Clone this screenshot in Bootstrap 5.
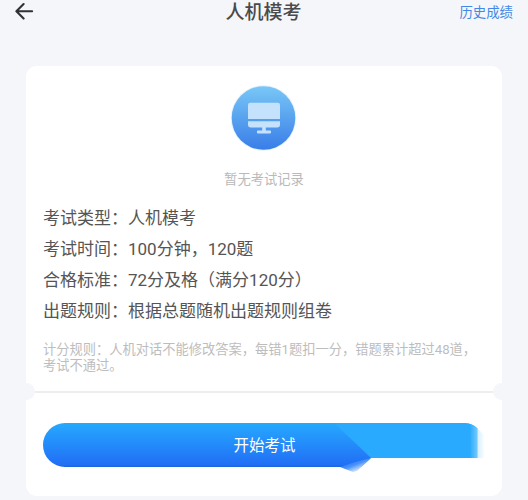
<!DOCTYPE html>
<html lang="zh-CN">
<head>
<meta charset="utf-8">
<meta name="viewport" content="width=device-width, initial-scale=1">
<title>人机模考</title>
<link href="https://cdn.jsdelivr.net/npm/bootstrap@5.3.0/dist/css/bootstrap.min.css" rel="stylesheet">
<style>
body{background:#f5f6fa;font-family:Roboto,"Noto Sans CJK SC",sans-serif;color:#555;height:500px;overflow:hidden}
.top-bar{height:24px;margin-bottom:42px;padding:0 15px 0 14px}
.top-bar>*{flex:1 1 0}
.page-title{font-size:19px;line-height:24px;font-weight:500;color:#4a4a4a;flex:0 0 auto;padding-top:2px}
.history{font-size:13.4px;line-height:24px;color:#4388e5;padding-top:1px}
.exam-card{margin:0 26px;height:430px;border-radius:11px;padding:19px 17px 0}
.empty-note{font-size:13.3px;line-height:20px;color:#b9b9b9;margin-top:19px}
.facts{font-size:17px;line-height:31.1px;margin-top:13px}
.rules{font-size:13.26px;line-height:15.5px;color:#bdbdbd;margin-top:15px}
.tear{height:17px;margin:10px -17px 0}
.tear i{width:9px;height:17px;background:#f5f6fa;flex:none}
.tear i:first-child{border-radius:0 9px 9px 0}
.tear i:last-child{border-radius:9px 0 0 9px}
.tear span{height:2px;background:#eee}
.start{height:52px;width:443px;margin-top:23px;color:#fff;font-size:15.5px}
.start svg{left:0;top:0}
.start span{line-height:47px;height:52px}
</style>
</head>
<body>
<header class="top-bar d-flex align-items-center">
  <a href="#" class="d-flex pb-1" aria-label="返回"><svg width="20" height="20" viewBox="0 0 20 20" fill="none" stroke="#303135" stroke-width="2.1" stroke-linecap="round" stroke-linejoin="round"><path d="M9.6 4.1 2.4 11.3l7.2 7.3M2.8 11.3h15.3"/></svg></a>
  <h1 class="page-title m-0">人机模考</h1>
  <a href="#" class="history text-end text-decoration-none">历史成绩</a>
</header>
<main class="exam-card bg-white">
  <svg class="d-block mx-auto" width="66" height="66" viewBox="0 0 66 66">
    <defs><linearGradient id="disc" x1="0" y1="0" x2="0" y2="1"><stop stop-color="#79c7f6"/><stop offset="1" stop-color="#397de9"/></linearGradient></defs>
    <circle cx="32.5" cy="33" r="32.8" fill="#e6f3fd"/>
    <circle cx="32.5" cy="33" r="31.8" fill="url(#disc)"/>
    <path fill="#c5e2fc" d="M19.2 17.7h27.6q2.2 0 2.2 2.2v14H17v-14q0-2.2 2.2-2.2z"/>
    <path fill="#c5e2fc" d="M17 36.3h32v3.8q0 2.4-2.4 2.4H34.8v3.1h4.4q.9 0 .9 1.4t-.9 1.4H26.8q-.9 0-.9-1.4t.9-1.4h4.4v-3.1H19.4q-2.4 0-2.4-2.4z"/>
  </svg>
  <div class="empty-note text-center">暂无考试记录</div>
  <div class="facts">
    <div>考试类型：人机模考</div>
    <div>考试时间：100分钟，120题</div>
    <div>合格标准：72分及格（满分120分）</div>
    <div>出题规则：根据总题随机出题规则组卷</div>
  </div>
  <div class="rules text-nowrap">计分规则：人机对话不能修改答案，每错1题扣一分，错题累计超过48道，<br>考试不通过。</div>
  <div class="tear d-flex align-items-center"><i></i><span class="flex-fill"></span><i></i></div>
  <button class="start btn border-0 p-0 d-block position-relative">
    <svg class="position-absolute" width="443" height="52" viewBox="0 0 443 52">
      <defs>
        <linearGradient id="fill" x1="0" y1="0" x2="0" y2="44" gradientUnits="userSpaceOnUse"><stop stop-color="#26a9ff"/><stop offset=".95" stop-color="#216ff5"/><stop offset="1" stop-color="#1c62dc"/></linearGradient>
        <linearGradient id="tip" x1="309" y1="37" x2="314" y2="50" gradientUnits="userSpaceOnUse"><stop stop-color="#2379fa"/><stop offset=".4" stop-color="#4a92fa"/><stop offset="1" stop-color="#fff"/></linearGradient>
        <linearGradient id="fade" x1="427" y1="0" x2="442" y2="0" gradientUnits="userSpaceOnUse"><stop stop-color="#2aabfc"/><stop offset=".46" stop-color="#6fc7fe"/><stop offset=".55" stop-color="#d9f0ff"/><stop offset="1" stop-color="#fff"/></linearGradient>
        <linearGradient id="facet" x1="294" y1="17" x2="303" y2="8" gradientUnits="userSpaceOnUse"><stop stop-color="#29aaff" stop-opacity=".15"/><stop offset="1" stop-color="#29aaff"/></linearGradient>
      </defs>
      <path d="M22 0H340V35H328L318 44H22A22 22 0 0 1 22 0z" fill="url(#fill)"/>
      <path d="M297 44 312 39 328 35 314 48 310 49z" fill="url(#tip)"/>
      <path d="M291 0H422Q429 0 434.5 5.5L435 35H328z" fill="url(#facet)"/>
      <path d="M427 1Q431 2 434.5 5.5L441 12 442 35H427z" fill="url(#fade)"/>
    </svg>
    <span class="position-relative d-block">开始考试</span>
  </button>
</main>
<script src="https://cdn.jsdelivr.net/npm/bootstrap@5.3.0/dist/js/bootstrap.bundle.min.js"></script>
</body>
</html>
